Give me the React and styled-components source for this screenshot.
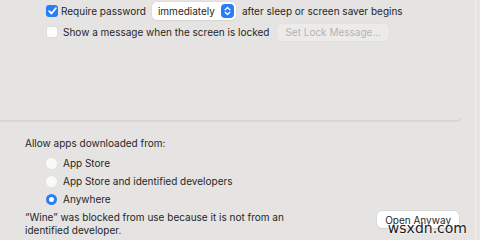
import React from "react";
import styled, { createGlobalStyle } from "styled-components";

const Global = createGlobalStyle`
  body {
    margin: 0;
    background: #e5e4e2;
    font-family: "Inter", "Liberation Sans", sans-serif;
    font-size: 10px;
    color: #262626;
  }
`;

const Page = styled.div`
  position: relative;
  width: 476px;
  height: 240px;
  overflow: hidden;
  border-right: 1px solid #efeeec;
  box-sizing: border-box;
`;

const Panel = styled.div`
  width: 462px;
  height: 122px;
  box-sizing: border-box;
  border-bottom: 2px solid #d7d6d4;
  border-bottom-right-radius: 6px;
  padding: 2px 0 0 46px;
  display: flex;
  flex-direction: column;
  gap: 3px;
`;

const Row = styled.div`
  display: flex;
  align-items: center;
  height: 18px;
`;

const Label = styled.span`
  margin: 0 ${(p) => p.mr || 6}px 0 ${(p) => p.ml || 0}px;
  white-space: nowrap;
`;

const Check = styled.span`
  width: 12px;
  height: 12px;
  border-radius: 3px;
  box-sizing: border-box;
  display: inline-flex;
  align-items: center;
  justify-content: center;
  background: ${(p) => (p.on ? "#2a7ef5" : "#ffffff")};
  border: ${(p) => (p.on ? "none" : "1px solid #dddcda")};
  flex: none;
  margin-right: 3px;
`;

const Popup = styled.div`
  display: flex;
  align-items: center;
  height: 18px;
  padding: 0 2px 0 6px;
  gap: 6px;
  background: #fff;
  border-radius: 5px;
  box-shadow: 0 0 0 0.5px #d9d8d6, 0 1px 1px rgba(0, 0, 0, 0.08);
  margin-right: 6px;
`;

const Stepper = styled.span`
  width: 13px;
  height: 14px;
  border-radius: 4px;
  background: #2a7ef5;
  display: inline-flex;
  align-items: center;
  justify-content: center;
`;

const Button = styled.div`
  height: 17px;
  display: flex;
  align-items: center;
  padding: 0 ${(p) => p.px || 8}px;
  border-radius: 5px;
  white-space: nowrap;
  background: ${(p) => (p.disabled ? "#ecebea" : "#ffffff")};
  color: ${(p) => (p.disabled ? "#b4b3b1" : "#262626")};
  box-shadow: ${(p) =>
    p.disabled
      ? "0 0 0 0.5px #dedddb"
      : "0 0 0 0.5px #d2d1cf, 0 1px 1px rgba(0,0,0,0.1)"};
`;

const Lower = styled.div`
  padding: 15px 0 0 25px;
  display: flex;
  flex-direction: column;
`;

const Title = styled.div`
  height: 13px;
  line-height: 13px;
  margin-bottom: 4px;
`;

const Radios = styled.div`
  display: flex;
  flex-direction: column;
  padding-left: 21px;
`;

const RadioRow = styled.div`
  display: flex;
  align-items: center;
  gap: 6px;
  height: 18px;
  line-height: 12px;
`;

const Radio = styled.span`
  width: 11px;
  height: 11px;
  border-radius: 50%;
  box-sizing: border-box;
  flex: none;
  background: ${(p) => (p.on ? "#fff" : "#fafaf9")};
  border: ${(p) => (p.on ? "3px solid #2a7ef5" : "none")};
  box-shadow: ${(p) => (p.on ? "none" : "0 0 0 0.5px #e1e0de")};
`;

const Footer = styled.div`
  display: flex;
  align-items: flex-start;
  justify-content: space-between;
  width: 434px;
  margin-top: 3px;
`;

const Note = styled.div`
  line-height: 13px;
`;

const Mark = styled.div`
  position: absolute;
  right: 8px;
  bottom: 4px;
  font-family: "DejaVu Sans", sans-serif;
  font-size: 14px;
  color: #1a1a1a;
  text-shadow: 0 0 2px #fff, 0 0 2px #fff;
`;

export default function App() {
  return (
    <Page>
      <Global />
      <Panel>
        <Row>
          <Check on>
            <svg width="9" height="8" viewBox="0 0 9 8">
              <path d="M1.2 4.2 L3.5 6.5 L7.8 1.2" fill="none" stroke="#fff" strokeWidth="1.8" strokeLinecap="round" strokeLinejoin="round" />
            </svg>
          </Check>
          <Label>Require password</Label>
          <Popup>
            <span>immediately</span>
            <Stepper>
              <svg width="7" height="10" viewBox="0 0 7 10">
                <path d="M1.2 3.8 L3.5 1.5 L5.8 3.8 M1.2 6.2 L3.5 8.5 L5.8 6.2" fill="none" stroke="#fff" strokeWidth="1.3" strokeLinecap="round" strokeLinejoin="round" />
              </svg>
            </Stepper>
          </Popup>
          <Label>after sleep or screen saver begins</Label>
        </Row>
        <Row>
          <Check />
          <Label ml={2} mr={8}>Show a message when the screen is locked</Label>
          <Button disabled px={8}>Set Lock Message...</Button>
        </Row>
      </Panel>
      <Lower>
        <Title>Allow apps downloaded from:</Title>
        <Radios>
          <RadioRow><Radio /><span>App Store</span></RadioRow>
          <RadioRow><Radio /><span>App Store and identified developers</span></RadioRow>
          <RadioRow><Radio on /><span>Anywhere</span></RadioRow>
        </Radios>
        <Footer>
          <Note>
            “Wine” was blocked from use because it is not from an
            <br />
            identified developer.
          </Note>
          <Button px={8}>Open Anyway</Button>
        </Footer>
      </Lower>
      <Mark>wsxdn.com</Mark>
    </Page>
  );
}
